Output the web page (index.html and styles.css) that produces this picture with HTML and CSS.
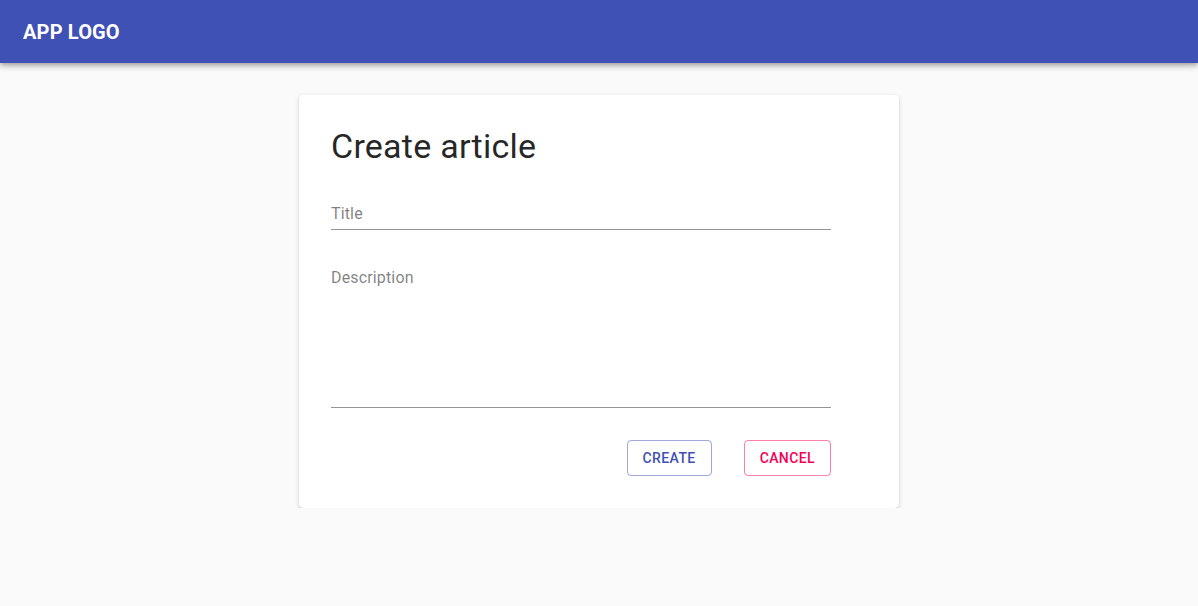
FILE: index.html
```html
<!DOCTYPE html>
<html>
<head>
<meta charset="utf-8">
<link rel="stylesheet" href="styles.css">
</head>
<body>
<header class="appbar">
  <div class="logo">APP LOGO</div>
</header>
<main class="main">
  <section class="card">
    <h1 class="heading">Create article</h1>
    <div class="field">
      <label class="field-label">Title</label>
      <div class="field-input field-input-single"></div>
    </div>
    <div class="field field-multi">
      <label class="field-label">Description</label>
      <div class="field-input field-input-multi"></div>
    </div>
    <div class="actions">
      <button class="btn btn-primary">Create</button>
      <button class="btn btn-secondary">Cancel</button>
    </div>
  </section>
</main>
</body>
</html>
```

FILE: styles.css
```css
* { box-sizing: border-box; }
html, body {
  margin: 0;
  padding: 0;
  background: #fafafa;
  font-family: Roboto, "Helvetica", "Arial", sans-serif;
  color: rgba(0,0,0,0.87);
}
.appbar {
  height: 63px;
  background: #3f51b5;
  display: flex;
  align-items: center;
  padding: 0 23px;
  box-shadow: 0px 2px 4px -1px rgba(0,0,0,0.2), 0px 4px 5px 0px rgba(0,0,0,0.14), 0px 1px 10px 0px rgba(0,0,0,0.12);
  position: relative;
  z-index: 2;
}
.logo {
  color: #fff;
  font-size: 20px;
  font-weight: 700;
  line-height: 1.6;
  letter-spacing: 0.0075em;
}
.main {
  display: flex;
  justify-content: center;
  padding-top: 32px;
}
.card {
  width: 600px;
  background: #fff;
  border-radius: 4px;
  padding: 32px;
  box-shadow: 0px 3px 1px -2px rgba(0,0,0,0.2), 0px 2px 2px 0px rgba(0,0,0,0.14), 0px 1px 5px 0px rgba(0,0,0,0.12);
}
.heading {
  margin: 0;
  font-size: 34px;
  font-weight: 400;
  line-height: 38px;
  letter-spacing: 0.00735em;
  color: rgba(0,0,0,0.87);
}
.field {
  width: 500px;
  display: flex;
  flex-direction: column;
  margin-top: 17px;
  position: relative;
}
.field-multi {
  margin-top: 16px;
}
.field-label {
  position: absolute;
  top: 24px;
  left: 0;
  font-size: 16px;
  line-height: 1;
  color: rgba(0,0,0,0.5);
  letter-spacing: 0.00938em;
}
.field-input {
  margin-top: 16px;
  border-bottom: 1px solid rgba(0,0,0,0.42);
}
.field-input-single { height: 32px; }
.field-input-multi { height: 146px; }
.actions {
  width: 500px;
  display: flex;
  justify-content: flex-end;
  gap: 32px;
  margin-top: 32px;
}
.btn {
  height: 36px;
  padding: 5px 15px;
  background: transparent;
  border-radius: 4px;
  font-family: Roboto, "Helvetica", "Arial", sans-serif;
  font-size: 14px;
  font-weight: 500;
  letter-spacing: 0.02857em;
  text-transform: uppercase;
  line-height: 1.75;
}
.btn-primary {
  color: #3f51b5;
  border: 1px solid rgba(63,81,181,0.5);
}
.btn-secondary {
  color: #f50057;
  border: 1px solid rgba(245,0,87,0.5);
}
```
